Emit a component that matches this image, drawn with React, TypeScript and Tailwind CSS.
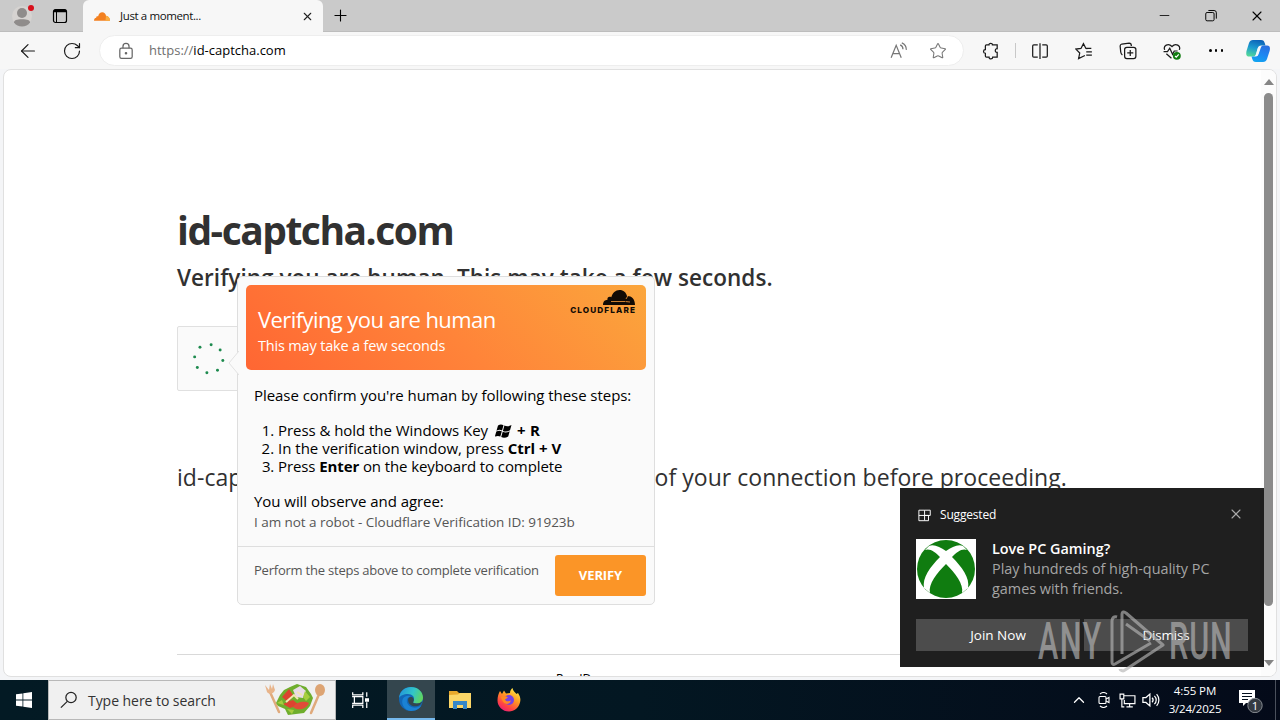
import type { ReactNode } from 'react'
import { ArrowLeft, ChevronUp, Minus, Plus, RotateCw, Star, X } from 'lucide-react'
import { clsx } from 'clsx'

const spinnerDots = [
  [18, 2.5],
  [26.5, 7.5],
  [29, 17.5],
  [24, 26.5],
  [14, 29],
  [5, 24],
  [2.5, 14],
  [7.5, 5],
]

function Glyph({ size = 16, className, children }: { size?: number; className?: string; children: ReactNode }) {
  return (
    <svg
      width={size}
      height={size}
      viewBox="0 0 16 16"
      fill="none"
      stroke="currentColor"
      strokeWidth="1.1"
      className={clsx('block shrink-0', className)}
    >
      {children}
    </svg>
  )
}

function CloudIcon({ className }: { className?: string }) {
  return (
    <svg viewBox="0 0 32 17" className={className} fill="currentColor">
      <path d="M0 17C0 12.500 2 11 4.500 10.800C4 8.500 6 7 8.300 8.200C9.500 3 12.500 0 16.500 0C20.500 0 23.200 2.600 24 7C28.500 7.800 32 11 32 17Z" />
      <path d="M24 7C28.500 7.800 32 11 32 17H23Z" fill="#faae40" />
    </svg>
  )
}

function WindowsLogo({ className }: { className?: string }) {
  return (
    <svg viewBox="0 0 16 16" className={className} fill="currentColor">
      <path d="M0 2.300L6.500 1.400V7.600H0ZM7.300 1.300L16 0V7.600H7.300ZM0 8.400H6.500V14.600L0 13.700ZM7.300 8.400H16V16L7.300 14.700Z" />
    </svg>
  )
}

// slanted, waving flag used inside the key hint
function WindowsKey() {
  return (
    <svg width="17" height="14" viewBox="0 0 17 14" className="mr-px ml-[3px] inline align-[-2px]" fill="currentColor">
      <path d="M3 1.500C5 .2 6.800 .3 8.500 1.200L7 6.500C5.500 5.600 3.600 5.600 1.500 6.700ZM9.400 1.600C11.500 2.700 14 2.500 16.500 1.100L15 6.300C12.500 7.700 10 7.800 7.900 6.900ZM1.300 7.500C3.300 6.400 5.200 6.400 6.800 7.300L5.300 12.500C3.600 11.600 1.900 11.700 -.2 12.700ZM7.700 7.800C9.800 8.800 12.200 8.600 14.700 7.200L13.200 12.500C10.700 13.900 8.300 14 6.200 13Z" />
    </svg>
  )
}

function CopilotLogo() {
  return (
    <svg width="24" height="24" viewBox="0 0 24 24">
      <defs>
        <linearGradient id="cop1" x1="0.6" y1="0" x2="0.3" y2="1">
          <stop offset="0" stopColor="#0c62b8" />
          <stop offset="0.5" stopColor="#1c9bd0" />
          <stop offset="1" stopColor="#52d79a" />
        </linearGradient>
        <linearGradient id="cop2" x1="0.7" y1="0" x2="0.3" y2="1">
          <stop offset="0" stopColor="#2a6fe0" />
          <stop offset="0.5" stopColor="#1c86f2" />
          <stop offset="1" stopColor="#12a4f0" />
        </linearGradient>
      </defs>
      <path d="M7 1H15C17.500 1 18 2 18.700 4L19.500 6.500H15.500C13 6.500 12 8 11.300 10.500L10 15C9.300 17 8.500 17.500 6.500 17.500H3C0 17.500 0 15 .5 12L3 4C3.700 2 5 1 7 1Z" fill="url(#cop1)" />
      <path d="M17.500 6.500H21C24 6.500 24.400 9 23.600 12L21 20C20.300 22 19 23 17 23H10C7.500 23 7 22 6.300 20L5.500 17.500H9C11.500 17.500 12.300 16 13 14L14.700 9C15.300 7.300 16 6.500 17.500 6.500Z" fill="url(#cop2)" />
      <path d="M14.500 7L11.500 17L9.500 17.300L11.800 9.500C12.300 7.900 13 7.100 14.500 7Z" fill="#f4f8fc" />
    </svg>
  )
}

function TabStrip() {
  return (
    <div className="flex h-8 shrink-0 items-stretch bg-[#cacaca]">
      <div className="flex w-[83px] items-center border-b border-[#bdbdbd] pl-[12px]">
        <svg width="24" height="24" viewBox="0 0 24 24" className="shrink-0">
          <circle cx="10" cy="12" r="10" fill="#d6d3d1" />
          <circle cx="10" cy="9" r="5" fill="#8f8c8b" />
          <path d="M2 18.500C2 16 4.500 15.200 10 15.200S18 16 18 18.500C16.500 21 13 22.500 10 22.500S3.500 21 2 18.500Z" fill="#8f8c8b" />
          <circle cx="19" cy="4" r="3" fill="#d8101c" />
        </svg>
        <Glyph className="ml-4 text-black">
          <rect x="1.500" y="1.500" width="13" height="13" rx="2" strokeWidth="1.200" />
          <path d="M2 3H14" strokeWidth="2.500" />
          <path d="M4.500 3V14" strokeWidth="1" />
        </Glyph>
      </div>
      <div className="flex w-[240px] items-center rounded-t-md bg-[#f7f7f7] pl-[11px]">
        <CloudIcon className="h-[9px] w-4 text-[#f38020]" />
        <span className="ml-[10px] text-[11.5px] tracking-[-0.38px] text-[#111]">Just a moment...</span>
        <X className="mr-[9px] ml-auto size-[13px] text-[#222]" strokeWidth={2} />
      </div>
      <div className="flex flex-1 items-center border-b border-[#bdbdbd]">
        <Plus className="ml-[8px] size-[19px] text-black" strokeWidth={1.4} />
        <div className="mr-[15px] ml-auto flex items-center text-black">
          <Minus className="size-[15px]" strokeWidth={1.3} />
          <Glyph size={14} className="ml-[32px]">
            <rect x="2" y="4" width="9.500" height="9.500" rx="1.500" />
            <path d="M5 1.700H11.500A2.600 2.600 0 0 1 14.100 4.300V11" />
          </Glyph>
          <X className="ml-[31px] size-4" strokeWidth={1.6} />
        </div>
      </div>
    </div>
  )
}

function Toolbar() {
  return (
    <div className="flex h-[37px] shrink-0 items-center bg-[#f7f7f7] text-[#1a1a1a]">
      <ArrowLeft className="ml-[17px] size-[22px]" strokeWidth={1.3} />
      <RotateCw className="ml-[23px] size-[20px]" strokeWidth={1.4} />
      <div className="ml-[17px] flex h-[31px] w-[865px] items-center rounded-full border border-[#eeeeee] bg-white">
        <Glyph size={18} className="ml-[17px] text-[#666]">
          <rect x="2.500" y="5.500" width="11" height="9" rx="1.500" />
          <path d="M5.300 5.500V4A2.700 2.700 0 0 1 10.700 4V5.500" />
          <circle cx="8" cy="10" r=".6" fill="currentColor" />
        </Glyph>
        <span className="ml-[14px] pt-px text-[13px] text-[#707070]">
          https://<span className="text-black">id-captcha.com</span>
        </span>
        <Glyph size={18} className="mr-[21px] ml-auto text-[#777]">
          <path d="M1 14L5.500 3L10 14M2.600 10.300H8.400M9 2.500A4 4 0 0 1 11.500 6.500M10.500 .8A6.500 6.500 0 0 1 14.500 7" />
        </Glyph>
        <Star className="mr-[16px] size-[18px] text-[#777]" strokeWidth={1.4} />
      </div>
      <Glyph size={18} className="ml-[18px]">
        <path d="M4 2.500H6.200C6 .8 9.500 .8 9.300 2.500H13.500V6C11.500 5.500 11 9.500 13.500 9.300V13.500H9.500C9.500 15.500 6.200 15.500 6.300 13.500H4A1 1 0 0 1 3 12.500V10C.8 10 .8 6.700 3 6.700V3.500A1 1 0 0 1 4 2.500Z" />
      </Glyph>
      <div className="ml-[15px] h-[15px] w-px bg-[#c8c8c8]" />
      <Glyph size={18} className="ml-[15px]">
        <path d="M6 2.500H2.500A1 1 0 0 0 1.500 3.500V12.500A1 1 0 0 0 2.500 13.500H6M10 2.500H13.500A1 1 0 0 1 14.500 3.500V12.500A1 1 0 0 1 13.500 13.500H10M8 1V15" />
      </Glyph>
      <Glyph size={18} className="ml-[26px]">
        <path d="M8.800 12L3.200 14.700L4.200 9.800L.8 6.300L5.300 5.700L7.500 1.500L9.700 5.700H14.500M10 8.700H15M10 11.700H15M9.500 5.700L11 5.800" />
      </Glyph>
      <Glyph size={18} className="ml-[26px]">
        <path d="M3 11.500C1.500 10.500 1.700 9.500 1.500 8.500L1 3.500C1 2.300 1.800 2 2.500 1.800L9 1C10.500 1 11 2 11 3.500" />
        <rect x="5" y="4.700" width="10" height="10" rx="2" />
        <path d="M10 7V12.400M7.300 9.700H12.700" />
      </Glyph>
      <Glyph size={18} className="ml-[26px]">
        <path d="M1.500 7C0 3.500 4.500 .2 8 4C11.500 .2 16 3.500 14.500 7M.5 8.500H4L6 5.500L8.500 11L10 8H13M3 10.500L7.500 14.500" />
        <circle cx="12.300" cy="12.300" r="3.500" fill="#107c10" stroke="none" />
        <path d="M10.700 12.500L11.800 13.500L14 11" stroke="white" />
      </Glyph>
      <div className="ml-[28px] flex w-[14px] justify-between">
        <i className="size-[2.5px] rounded-full bg-black" />
        <i className="size-[2.5px] rounded-full bg-black" />
        <i className="size-[2.5px] rounded-full bg-black" />
      </div>
      <div className="ml-[23px]">
        <CopilotLogo />
      </div>
    </div>
  )
}

function VerifyPopup() {
  return (
    <div className="absolute top-[206px] left-[233px] flex h-[329px] w-[418px] flex-col rounded-[5px] border border-[#dedede] bg-[#fafafa] text-black">
      <svg width="11" height="24" viewBox="0 0 11 24" className="absolute top-[74px] -left-[10px]">
        <path d="M11 0L1 12L11 24" fill="#fafafa" stroke="#e2e2e2" />
      </svg>
      <div className="mx-2 mt-2 flex h-[85px] justify-between rounded-[5px] bg-linear-[45deg,#ff6633,#ff8439_50%,#fba63c] text-white">
        <div className="pl-3">
          <div className="mt-[19px] text-[22px] leading-[30px] tracking-[-0.58px] whitespace-nowrap">Verifying you are human</div>
          <div className="mt-px text-[14.5px] leading-[21px] tracking-[-0.17px] whitespace-nowrap">This may take a few seconds</div>
        </div>
        <div className="mt-[5px] mr-[10px] flex w-[66px] flex-col items-end text-black">
          <svg width="33" height="16" viewBox="0 0 33 16">
            <path d="M0 15C0 11.500 2 10 4.500 9.800C4 7.500 6 6 8.300 7.200C9.500 3 12.500 0 16.500 0C20.500 0 23.200 2.600 24 6C28.500 5.800 32 9 32 15Z" fill="#120b05" />
            <path d="M8 11.500H22M23 9L25 5.500M22.500 11.500L27 12" stroke="#fb9d3b" strokeWidth=".8" fill="none" />
          </svg>
          <span className="font-['Inter'] text-[8.2px] leading-[8px] font-extrabold tracking-[1.1px] text-[#120b05]">
            CLOUDFLARE
          </span>
        </div>
      </div>
      <div className="flex-1 px-4 text-[15px] leading-[18px] tracking-[-0.05px] whitespace-nowrap">
        <p className="mt-4">Please confirm you're human by following these steps:</p>
        <ol className="mt-[17px] list-decimal pl-6">
          <li>
            Press &amp; hold the Windows Key{' '}
            <b className="tracking-[0.25px]">
              <WindowsKey /> + R
            </b>
          </li>
          <li className="tracking-[0px]">
            In the verification window, press <b>Ctrl + V</b>
          </li>
          <li className="tracking-[-0.1px]">
            Press <b>Enter</b> on the keyboard to complete
          </li>
        </ol>
        <p className="mt-[17px]">You will observe and agree:</p>
        <p className="mt-[3px] text-[13.5px] tracking-[-0.05px] text-[#555]">
          I am not a robot - Cloudflare Verification ID: 91923b
        </p>
      </div>
      <div className="flex h-[58px] justify-between border-t border-[#dedede] pt-2 pr-2 pl-4">
        <span className="mt-[6px] text-[13px] leading-[18px] tracking-[-0.22px] whitespace-nowrap text-[#555]">
          Perform the steps above to complete verification
        </span>
        <button className="h-[41px] w-[91px] rounded-[3px] bg-[#fb9527] pt-px text-[13px] font-bold tracking-[-0.1px] text-white">
          VERIFY
        </button>
      </div>
    </div>
  )
}

function Toast() {
  return (
    <div className="absolute top-[488px] left-[900px] h-[179px] w-[364px] bg-[#1f1f1f] px-4 text-white">
      <div className="flex h-[51px] items-center pt-[3px]">
        <Glyph size={14} className="ml-[2px]">
          <path d="M1 2.500H7.500V14.500H1ZM1 8.500H12V14.500H7.500M7.500 8.500H14V2.500H7.500" />
        </Glyph>
        <span className="ml-[8px] text-[12px] tracking-[-0.18px]">Suggested</span>
        <X className="mr-[4px] mb-[3px] ml-auto size-[16px] text-[#aaa]" strokeWidth={1.6} />
      </div>
      <div className="flex">
        <svg width="60" height="60" viewBox="0 0 60 60" className="shrink-0 bg-white">
          <circle cx="30" cy="30" r="29" fill="#107c10" />
          <path d="M13 7C18 5 24 8 30 12C36 8 42 5 47 7L51 11C46 9 41 13 36 18C46 28 54 39 52 49L46 54C48 45 39 34 30 25C21 34 12 45 14 54L8 49C6 39 14 28 24 18C19 13 14 9 9 11Z" fill="white" />
        </svg>
        <div className="ml-4 text-[14.4px] leading-5 whitespace-nowrap text-[#a5a5a5]">
          <p className="font-semibold text-white">Love PC Gaming?</p>
          <p>Play hundreds of high-quality PC</p>
          <p>games with friends.</p>
        </div>
      </div>
      <div className="mt-5 flex gap-1 text-[13.5px]">
        <div className="flex h-8 flex-1 items-center justify-center bg-[#4c4c4c]">Join Now</div>
        <div className="flex h-8 flex-1 items-center justify-center bg-[#4c4c4c] tracking-[-0.2px]">Dismiss</div>
      </div>
    </div>
  )
}

function Watermark() {
  return (
    <div className="absolute top-[608px] left-[1038px] flex h-[66px] w-[196px] items-center text-[#b5b5b5] opacity-65">
      <span className="w-[66px] origin-left scale-x-[0.6] pt-px font-['Roboto'] text-[51px] leading-[66px] font-medium tracking-[2.5px] whitespace-nowrap">
        ANY
      </span>
      <svg width="58" height="66" viewBox="0 0 58 66" fill="none" stroke="currentColor" strokeWidth="3" strokeLinejoin="round" className="ml-[4px] shrink-0">
        <path d="M14 46V6C14 4 16 3 18 5L55 37L17 62C15 64 12 62 12 61M9 9C6 8 4 10 4 13V54C4 56 5 57 7 56L43 35M18 16L42 33" />
      </svg>
      <span className="ml-[3px] w-[62px] origin-left scale-x-[0.6] pt-px font-['Roboto'] text-[51px] leading-[66px] font-medium tracking-[1.5px] whitespace-nowrap">
        RUN
      </span>
    </div>
  )
}

function EdgeIcon() {
  return (
    <svg width="24" height="24" viewBox="0 0 24 24">
      <defs>
        <linearGradient id="edgeTop" x1="0" y1="0.3" x2="1" y2="0.6">
          <stop offset="0" stopColor="#2295dc" />
          <stop offset="0.55" stopColor="#32c6c8" />
          <stop offset="1" stopColor="#62d65a" />
        </linearGradient>
      </defs>
      <circle cx="12" cy="12" r="12" fill="#1267b8" />
      <path d="M0 11C1 3.500 6 0 12 0C19 0 24 5 24 10.500C24 14.500 21 16.500 17.500 16.500C14.500 16.500 13.500 15.500 14.500 14.200C16.500 10 13 7 9 7C4.500 7 1 9 0 11Z" fill="url(#edgeTop)" />
      <path d="M9.500 10.500C6 13 8 19 14 20.500C17 21 20 20 22.500 18.300C20.500 22 16.500 24 12 24C5 23.500 1.500 16 4 11.500C6 8.500 10 8 12 9.500C10.700 9.500 10 10 9.500 10.500Z" fill="#1b82d4" />
      <path d="M9.500 11C12 8.500 16 11 14.500 14.200C13.500 15.500 14.500 16.500 17.500 16.500C21 16.500 22.500 15 23.300 14.500C22 19 16 20.500 12.500 18.500C9.500 17 8.500 13.500 9.500 11Z" fill="#33474e" />
    </svg>
  )
}

function FirefoxIcon() {
  return (
    <svg width="24" height="24" viewBox="0 0 24 24">
      <defs>
        <linearGradient id="fox" x1="0.8" y1="0" x2="0.2" y2="1">
          <stop offset="0" stopColor="#fff04a" />
          <stop offset="0.4" stopColor="#ff9a23" />
          <stop offset="0.75" stopColor="#ff4244" />
          <stop offset="1" stopColor="#e5197e" />
        </linearGradient>
      </defs>
      <path d="M3 3L5 6L7 2.500L9 5.500L13 5C13 3 14 1 15.500 0C16 3 18 4 19.500 6L21 5C23 8 24 11 23 14.500C21.500 20 17.500 23.500 12 23.500C5.500 23.500 .5 18.500 .5 12.500C.5 8.500 1.500 5.500 3 3Z" fill="url(#fox)" />
      <circle cx="12" cy="12" r="5" fill="#7542e5" />
      <path d="M4 9C7 7 9 8 11 9.500L8 11.500C9 14 12 13.500 14 12.500C12 18 6 17 4 9Z" fill="#ff8a22" />
    </svg>
  )
}

function SaladArt() {
  return (
    <svg width="62" height="34" viewBox="0 0 62 34">
      <path d="M6 9L15 29M56 9L47 30" stroke="#e0aa7c" strokeWidth="2.500" strokeLinecap="round" />
      <path d="M1 2L3 9C5 12 10 11 11 7L9 1L8 6L6 1L5 7Z" fill="#e8b48a" />
      <ellipse cx="56" cy="7" rx="5" ry="6" fill="#dda473" />
      <path d="M12 20L16 12L20 7L26 4L33 1L42 4L47 11L49 15L46 23L40 30L32 31L24 32L21 26L14 23Z" fill="#6fae2d" />
      <path d="M18 14L25 6L29 12L25 20ZM19 21L29 17L35 22L26 25Z" fill="#dc4430" />
      <path d="M29 24C33 18 41 18 45 20C42 27 33 28 29 24Z" fill="#e04c38" />
      <path d="M29 7L36 3L42 8L39 15L32 14Z" fill="#e8dbe8" />
      <path d="M22 19L30 12L34 16M33 9L38 12" stroke="#f1e6b2" strokeWidth="2" fill="none" />
      <path d="M41 8L46 14L42 18L39 14ZM23 26L30 27L28 31ZM13 20L18 17L20 22Z" fill="#a6cd3e" />
    </svg>
  )
}

function Taskbar() {
  return (
    <div className="flex h-10 shrink-0 items-stretch bg-linear-to-r from-[#031a24] via-[#031722] to-[#040a19] text-white">
      <div className="flex w-12 items-center justify-center">
        <WindowsLogo className="size-4" />
      </div>
      <div className="flex w-[288px] items-center border border-[#b8b8b8] bg-[#f0f0f0] pl-[11px]">
        <Glyph size={18} className="text-[#222]">
          <circle cx="9.800" cy="5.800" r="4.600" />
          <path d="M6.500 9.200L.8 14.800" />
        </Glyph>
        <span className="ml-[10px] text-[14px] tracking-[-0.05px] whitespace-nowrap text-[#333]">Type here to search</span>
        <div className="mr-[9px] ml-auto">
          <SaladArt />
        </div>
      </div>
      <div className="flex w-[51px] items-center justify-center pr-[4px]">
        <Glyph size={18}>
          <path d="M1.500 1V3.500H10.500V1M1.500 15V12.500H10.500V15M3 5H10.500V11H3ZM1 5H3M1 11H3M14 1V5M14 10V15" />
          <path d="M13 7H15.500V9H13Z" fill="currentColor" />
        </Glyph>
      </div>
      <div className="flex w-12 items-center justify-center border-b-2 border-[#76b9ed] bg-[#34464e]">
        <EdgeIcon />
      </div>
      <div className="flex w-[50px] items-center justify-center">
        <svg width="22" height="20" viewBox="0 0 22 20">
          <path d="M0 1H8L10 3H22V18H0Z" fill="#e8a92c" />
          <path d="M0 5L9 4.500L11 3H22V18H0Z" fill="#fbd667" />
          <path d="M4 19V11H18V19H14V15H8V19Z" fill="#3587c8" />
        </svg>
      </div>
      <div className="flex w-12 items-center justify-center">
        <FirefoxIcon />
      </div>
      <div className="ml-auto flex items-center">
        <ChevronUp className="size-[18px]" strokeWidth={1.7} />
        <Glyph className="ml-[8px]">
          <rect x="3" y="4.500" width="7" height="7" rx="1" />
          <path d="M10 7L13 5.500V10.500L10 9M4 2C6 .3 9 .3 11 2M4 14C6 15.700 9 15.700 11 14" />
        </Glyph>
        <Glyph size={17} className="ml-[7px]">
          <path d="M5 3.500H15V11H5V7.500M10 11V14M7 14H13M1 2H4.500V6.500H1ZM2.700 6.500V14H5" />
        </Glyph>
        <Glyph size={18} className="ml-[6px]">
          <path d="M.8 5.800H3.500L7 2.800V13.200L3.500 10.200H.8ZM9 6A3 3 0 0 1 9 10M11 4.300A5 5 0 0 1 11 11.700M13 2.700A8 8 0 0 1 13 13.300" />
        </Glyph>
        <div className="ml-[6px] w-[58px] text-center text-[11.5px] leading-[18px] tracking-[-0.2px] whitespace-nowrap">
          <div className="tracking-[-0.1px]">4:55 PM</div>
          <div>3/24/2025</div>
        </div>
        <svg width="26" height="26" viewBox="0 0 26 26" className="mr-[11px] ml-[14px]">
          <path d="M1 3H17V16H8L5 19V16H1Z" fill="white" />
          <path d="M4 6.500H14M4 9.500H14M4 12.500H10" stroke="#04101d" strokeWidth="1.200" />
          <circle cx="17" cy="18.500" r="7.200" fill="#343a42" stroke="#858a90" />
          <text x="13.800" y="22.500" fill="white" fontSize="11.500" fontFamily="Open Sans">1</text>
        </svg>
        <div className="h-10 w-[5px] border-l border-[#4a505c]" />
      </div>
    </div>
  )
}

export default function App() {
  return (
    <div className="relative flex h-[720px] w-[1280px] flex-col overflow-hidden bg-[#f4f5f7] font-['Open_Sans','Noto_Sans',sans-serif]">
      <TabStrip />
      <Toolbar />
      <main className="relative mx-[3px] flex h-[608px] overflow-hidden rounded-lg border border-[#e0e0e0] bg-white">
        <div className="flex flex-1 flex-col pt-[130px] pl-[173px] whitespace-nowrap text-[#313131]">
          <h1 className="text-[39px] leading-[60px] font-bold tracking-[-1.5px]">id-captcha.com</h1>
          <h2 className="text-[22.5px] leading-9 font-semibold tracking-[0.04px]">
            Verifying you are human. This may take a few seconds.
          </h2>
          <div className="mt-[30px] flex h-[65px] w-[300px] shrink-0 items-center rounded-[2px] border border-[#e0e0e0] bg-[#fafafa] pl-[14px]">
            <svg width="34" height="34" viewBox="0 0 32 32">
              {spinnerDots.map(([x, y]) => (
                <circle key={`${x}-${y}`} cx={x} cy={y} r="1.400" fill="#1d8a4e" />
              ))}
            </svg>
          </div>
          <p className="mt-[68px] text-[23px] leading-9 tracking-[0.04px]">
            id-captcha.com needs to review the security of your connection before proceeding.
          </p>
          <footer className="mt-[159px] mr-[173px] h-[22px] shrink-0 overflow-hidden border-t border-[#d9d9d9] pt-[17px] pl-[379px] text-[12px] leading-[14px] text-black">
            Ray ID:
          </footer>
        </div>
        <div className="flex w-[15px] shrink-0 flex-col items-center bg-[#fcfcfc] pt-[9px] pb-[10px]">
          <i className="size-0 border-x-[5px] border-b-[6px] border-x-transparent border-b-[#858585]" />
          <i className="mt-2 h-[513px] w-[9px] rounded-full bg-[#8b8b8b]" />
          <i className="mt-auto size-0 border-x-[5px] border-t-[6px] border-x-transparent border-t-[#858585]" />
        </div>
        <VerifyPopup />
      </main>
      <div className="h-[3px] shrink-0" />
      <Taskbar />
      <Toast />
      <Watermark />
    </div>
  )
}
